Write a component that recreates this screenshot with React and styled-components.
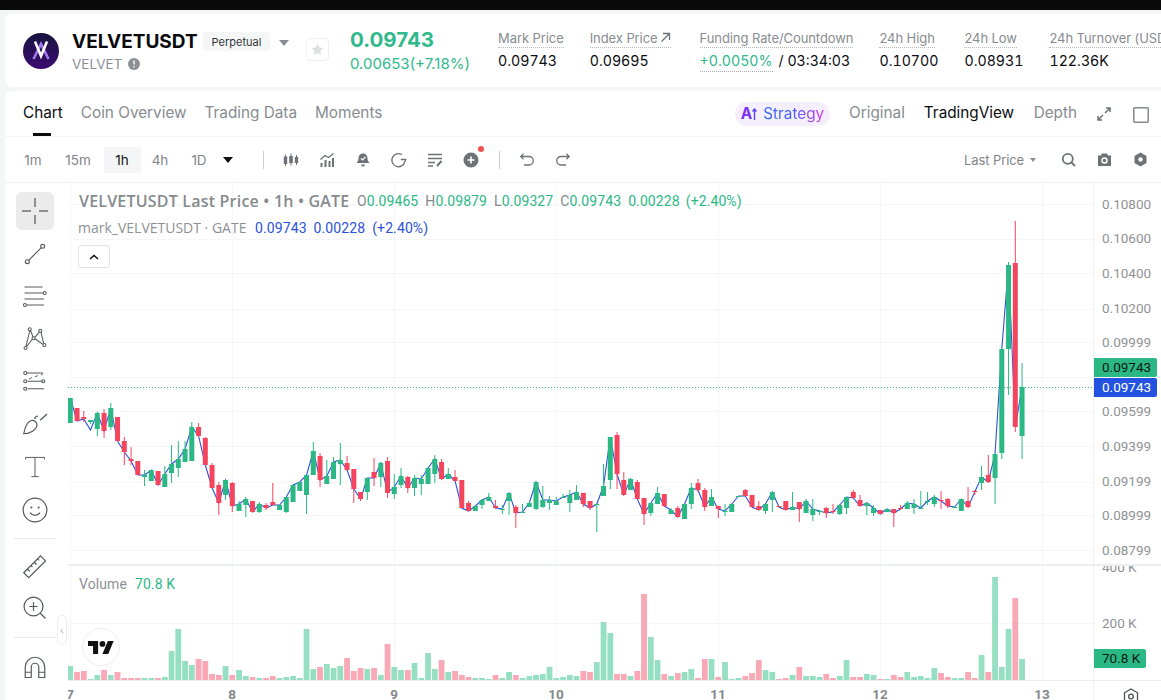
import styled, { createGlobalStyle } from "styled-components";

const GREEN = "#2bb885";
const RED = "#f4455f";
const BLUE = "#2b52d9";
const GRID = "#f5f6f7";

// [green?, body top, body bottom, wick top, wick bottom, volume] in page pixels
const candles = [
  [1,398,423,398,423,14],[0,408,421,408,421,8],[0,417,419,411,422,9],[1,420,422,420,424,1],[1,413,429,412,436,5],
  [0,413,431,409,438,10],[1,408,427,403,430,5],[0,417,441,417,441,8],[0,441,452,437,465,2],[0,459,461,447,465,2],
  [0,461,475,461,475,2],[1,475,477,470,486,2],[1,470,481,470,481,2],[0,471,485,471,485,2],[1,474,487,466,487,3],
  [1,464,473,445,483,29],[1,459,468,441,477,51],[1,449,462,441,462,19],[1,427,461,422,461,15],[0,427,436,423,437,21],
  [0,438,465,437,465,19],[0,465,488,463,488,6],[0,485,503,482,515,5],[1,480,495,480,500,14],[0,483,506,482,512,5],
  [1,504,511,501,511,10],[1,499,505,497,517,4],[0,501,512,501,512,3],[1,504,512,502,513,2],[0,505,508,503,510,2],
  [0,502,505,483,505,4],[1,505,510,505,510,2],[1,497,512,497,513,3],[1,485,502,485,502,4],[1,482,491,482,491,2],
  [1,475,495,475,514,51],[1,451,475,442,475,11],[0,456,480,453,487,13],[1,476,484,460,484,16],[1,462,479,457,479,12],
  [1,460,464,443,485,14],[0,463,470,456,471,22],[0,469,489,469,503,9],[0,492,499,492,501,12],[1,478,492,478,500,11],
  [0,472,478,458,486,12],[1,463,477,462,487,5],[0,461,493,457,498,36],[1,487,494,474,499,13],[1,476,485,468,488,10],
  [0,477,488,476,493,10],[1,478,488,475,496,17],[1,479,484,475,495,2],[1,468,484,468,484,27],[1,459,474,455,483,11],
  [0,462,479,459,480,20],[1,474,479,468,479,8],[0,477,481,470,481,9],[0,480,508,480,508,5],[0,503,511,501,511,3],
  [1,506,511,505,511,2],[1,500,505,499,509,2],[1,497,501,493,501,1],[0,506,508,500,509,5],[1,509,510,505,514,2],
  [1,493,501,493,515,8],[0,507,513,505,528,5],[1,512,513,504,513,2],[1,503,507,502,507,4],[1,482,509,482,510,5],
  [1,500,507,486,508,6],[1,500,503,496,510,13],[1,501,505,497,505,2],[1,497,498,494,498,3],[1,495,503,490,512,5],
  [1,492,500,485,500,4],[0,493,504,493,507,9],[0,501,508,501,510,8],[1,504,505,504,532,18],[1,486,496,464,496,58],
  [1,437,480,437,489,47],[0,435,474,432,489,6],[0,480,495,472,495,6],[1,479,490,478,490,4],[0,482,499,480,499,9],
  [0,498,514,498,525,86],[1,503,513,503,516,43],[1,493,504,487,504,20],[0,494,506,494,507,6],[1,510,514,508,514,4],
  [0,508,517,506,517,7],[1,504,519,504,519,8],[1,488,504,483,509,11],[0,483,490,479,492,2],[0,490,507,488,511,21],
  [1,497,506,489,506,21],[0,506,509,506,518,3],[1,511,512,504,516,18],[1,504,512,504,512,1],[1,496,497,496,497,2],
  [0,490,496,489,496,4],[0,495,507,495,507,7],[0,506,510,501,510,20],[1,504,511,504,514,10],[1,492,500,492,512,8],
  [0,506,507,506,507,1],[0,501,510,501,510,2],[1,507,510,492,510,5],[0,502,509,502,522,13],[1,501,513,499,513,4],
  [1,509,515,499,521,4],[1,511,512,510,515,3],[0,508,513,507,518,6],[0,511,512,504,514,2],[1,505,514,504,515,4],
  [1,497,508,497,514,20],[0,492,498,490,498,3],[0,500,506,495,506,3],[1,503,506,502,515,6],[1,508,513,505,516,5],
  [0,510,514,510,514,1],[1,509,512,509,512,1],[0,509,513,509,527,5],[0,508,509,505,510,3],[1,503,509,501,509,8],
  [1,504,508,499,514,3],[1,508,509,491,509,4],[1,501,502,492,505,2],[1,497,504,495,507,12],[0,500,501,491,509,7],
  [0,499,506,498,508,3],[1,507,508,506,508,2],[1,499,511,499,511,2],[0,501,507,487,508,8],[0,491,492,490,495,2],
  [1,477,483,466,490,25],[0,475,482,455,483,8],[1,454,478,454,504,103],[1,349,453,349,459,13],[1,265,349,262,395,51],
  [0,263,427,221,432,82],[1,387,436,363,459,21],
];

const candleX = (i) => 70.3 + 6.75 * i;
const markLine = candles
  .map(([up, top, bottom], i) => `${candleX(i).toFixed(1)},${i === 3 ? 430 : up ? top : bottom}`)
  .join(" ");

const priceLabels = [
  ["0.10800", 204], ["0.10600", 238], ["0.10400", 273], ["0.10200", 308], ["0.09999", 342],
  ["0.09599", 411], ["0.09399", 446], ["0.09199", 481], ["0.08999", 515], ["0.08799", 550],
];
const gridRows = [204, 239, 273, 309, 342, 377, 411, 446, 482, 515, 550, 623];
const days = [["7", 70], ["8", 232], ["9", 394], ["10", 556], ["11", 718], ["12", 880], ["13", 1042]];

const GlobalStyle = createGlobalStyle`
  html, body {
    margin: 0;
    height: 700px;
    overflow: hidden;
    background: #f5f7f7;
    font-family: Inter, "Liberation Sans", sans-serif;
  }
  * { box-sizing: border-box; }
`;

const Page = styled.div`
  width: 1161px;
  height: 700px;
  display: flex;
  flex-direction: column;
  overflow: hidden;
`;
const BlackBar = styled.div`
  height: 10px;
  flex: none;
  background: #0a0a0a;
`;
const Header = styled.header`
  flex: none;
  height: 73px;
  margin: 4px 0 4px 5px;
  padding-left: 18px;
  display: flex;
  align-items: center;
  background: #fff;
  border-radius: 8px 0 0 8px;
  white-space: nowrap;
  overflow: hidden;
`;
const Logo = styled.svg`
  width: 36px;
  height: 36px;
  flex: none;
  margin-right: 13px;
`;
const NameBlock = styled.div`
  width: 131px;
  flex: none;
  margin-top: 1px;
`;
const SymbolName = styled.div`
  font-size: 19px;
  font-weight: 700;
  color: #0b0b10;
  line-height: 22px;
`;
const SubName = styled.div`
  display: flex;
  align-items: center;
  gap: 6px;
  margin-top: 3px;
  font-size: 13.5px;
  color: #8b9095;
`;
const Badge = styled.span`
  flex: none;
  width: 67px;
  height: 19px;
  margin-top: -18px;
  display: flex;
  align-items: center;
  justify-content: center;
  background: #f5f7f7;
  border-radius: 3px;
  font-size: 11px;
  color: #33363a;
`;
const BadgeCaret = styled.i`
  width: 0;
  height: 0;
  flex: none;
  margin: -16px 0 0 9px;
  border-left: 5px solid transparent;
  border-right: 5px solid transparent;
  border-top: 6px solid #8b8f93;
`;
const StarBox = styled.div`
  width: 23px;
  height: 23px;
  flex: none;
  margin: -2px 21px 0 17px;
  display: flex;
  align-items: center;
  justify-content: center;
  border: 1px solid #eff0f1;
  border-radius: 4px;
`;
const PriceBlock = styled.div`
  width: 148px;
  flex: none;
  color: #2fb98c;
`;
const LastPrice = styled.div`
  font-size: 20.5px;
  font-weight: 700;
  line-height: 26px;
`;
const PriceChange = styled.div`
  margin-top: 1px;
  font-size: 15px;
  line-height: 20px;
`;
const Stats = styled.div`
  display: flex;
  flex: none;
  gap: 26px;
  margin-top: -2px;
`;
const Stat = styled.div`
  display: flex;
  flex-direction: column;
  align-items: flex-start;
  margin-right: ${(p) => p.$extra || 0}px;
`;
const StatLabel = styled.div`
  display: flex;
  align-items: center;
  gap: 2px;
  height: 20px;
  font-size: 13px;
  letter-spacing: -0.08px;
  color: #878c91;
  border-bottom: 1px dotted #b8bbbe;
`;
const StatValue = styled.div`
  margin-top: 3px;
  height: 20px;
  font-size: 14.2px;
  line-height: 20px;
  font-variant-numeric: tabular-nums;
  color: #0b0b10;
`;
const FundingRate = styled.span`
  display: inline-block;
  margin-right: 6px;
  color: #2fb98c;
  border-bottom: 1px dotted #a8abae;
`;

const Panel = styled.section`
  flex: 1;
  min-height: 0;
  margin-left: 5px;
  display: flex;
  flex-direction: column;
  background: #fff;
  border-radius: 8px 0 0 0;
`;
const TabBar = styled.nav`
  flex: none;
  height: 46px;
  padding-left: 18px;
  display: flex;
  align-items: center;
  border-bottom: 1px solid #f3f4f5;
`;
const Tab = styled.button`
  position: relative;
  height: 45px;
  margin-right: ${(p) => p.$gap || 18}px;
  padding: 0 0 2px;
  border: 0;
  background: none;
  font: 400 15.3px Inter, sans-serif;
  white-space: nowrap;
  color: ${(p) => (p.$active ? "#0b0b10" : "#878c91")};
  &::after {
    content: "";
    display: ${(p) => (p.$underline ? "block" : "none")};
    position: absolute;
    left: 10px;
    bottom: 0;
    width: 18px;
    height: 3px;
    background: #0b0b10;
  }
`;
const Spacer = styled.div`
  flex: 1;
`;
const StrategyPill = styled.div`
  height: 24px;
  width: 95px;
  flex: none;
  margin-right: 19px;
  display: flex;
  align-items: center;
  justify-content: center;
  gap: 6px;
  border-radius: 12px;
  background: #f5effd;
  font-size: 15.3px;
`;
const StrategyText = styled.span`
  background: linear-gradient(90deg, #3367f2, #3f62f0 45%, #d23be6);
  -webkit-background-clip: text;
  background-clip: text;
  color: transparent;
`;
const AiMark = styled.span`
  font-weight: 700;
  color: #7b2ff0;
  display: flex;
  align-items: center;
`;
const WindowIcon = styled.svg`
  flex: none;
  display: block;
`;
const SquareIcon = styled(WindowIcon)`
  margin: 2px 12px 0 22px;
`;

const Toolbar = styled.div`
  flex: none;
  height: 46px;
  padding-right: 3px;
  display: flex;
  align-items: center;
  border-bottom: 1px solid #f0f1f2;
`;
const Intervals = styled.div`
  display: flex;
  align-items: center;
  flex: none;
  padding-left: 9.5px;
  width: 258px;
`;
const Interval = styled.span`
  width: 37px;
  height: 26px;
  margin-right: ${(p) => p.$gap}px;
  display: flex;
  align-items: center;
  justify-content: center;
  border-radius: 3px;
  font-size: 13.5px;
  color: ${(p) => (p.$active ? "#111" : "#7f8488")};
  background: ${(p) => (p.$active ? "#f4f5f6" : "transparent")};
`;
const IntervalCaret = styled.i`
  width: 0;
  height: 0;
  border-left: 5px solid transparent;
  border-right: 5px solid transparent;
  border-top: 6px solid #111;
`;
const ToolDivider = styled.i`
  width: 1px;
  height: 18px;
  background: #c9cbcd;
  flex: none;
`;
const ToolSlot = styled.span`
  position: relative;
  width: 36px;
  flex: none;
  display: flex;
  justify-content: center;
  color: #6e7276;
`;
const ToolGroup = styled.div`
  display: flex;
  flex: none;
  margin: ${(p) => p.$margin};
`;
const RedDot = styled.i`
  position: absolute;
  top: -6px;
  right: 5px;
  width: 6px;
  height: 6px;
  border-radius: 50%;
  background: #f0504f;
`;
const PriceMode = styled.div`
  display: flex;
  align-items: center;
  gap: 6px;
  margin-right: 14px;
  font-size: 13px;
  letter-spacing: -0.1px;
  color: #7f8488;
`;
const SmallCaret = styled.i`
  width: 0;
  height: 0;
  border-left: 3.5px solid transparent;
  border-right: 3.5px solid transparent;
  border-top: 4px solid #8b8f93;
`;

const Workspace = styled.div`
  flex: 1;
  min-height: 0;
  display: flex;
`;
const Rail = styled.aside`
  position: relative;
  width: 63px;
  flex: none;
  padding: 9px 4px 0 0;
  display: flex;
  flex-direction: column;
  align-items: center;
  overflow: hidden;
`;
const RailButton = styled.div`
  width: 38px;
  height: 38px;
  margin-bottom: 4.7px;
  flex: none;
  display: flex;
  align-items: center;
  justify-content: center;
  border-radius: 6px;
  color: #55585c;
  background: ${(p) => (p.$active ? "#ebebeb" : "transparent")};
`;
const RailDivider = styled.i`
  width: 42px;
  height: 1px;
  flex: none;
  margin: ${(p) => p.$margin};
  background: #e8e9ea;
`;
const CollapseHandle = styled.div`
  position: absolute;
  left: 52px;
  top: 432px;
  width: 10px;
  height: 30px;
  display: flex;
  align-items: center;
  justify-content: center;
  border: 1px solid #eceded;
  border-radius: 5px;
  background: #fff;
  font: 10px "Liberation Sans", sans-serif;
  color: #a4a7aa;
`;

const ChartArea = styled.div`
  position: relative;
  flex: 1;
  min-width: 0;
  overflow: hidden;
`;
const ChartSvg = styled.svg`
  display: block;
  width: 1093px;
  height: 517px;
`;
const AxisText = styled.text`
  font: 13.5px Roboto, "Liberation Sans", sans-serif;
  fill: #8f9295;
  dominant-baseline: central;
`;
const DayText = styled.text`
  font: 700 13.5px Roboto, "Liberation Sans", sans-serif;
  fill: #85888b;
  text-anchor: middle;
  dominant-baseline: central;
`;
const Legend = styled.div`
  position: absolute;
  left: 11px;
  top: 7px;
  display: flex;
  flex-direction: column;
  align-items: flex-start;
  white-space: nowrap;
  font: 14px "Open Sans", sans-serif;
`;
const LegendRow = styled.div`
  display: flex;
  align-items: center;
  height: 21px;
  margin-bottom: ${(p) => p.$mb}px;
`;
const LegendTitle = styled.span`
  width: 278px;
  font-size: 16px;
  letter-spacing: 0.2px;
  font-weight: 600;
  color: #858a8e;
`;
const MarkTitle = styled.span`
  width: 177px;
  margin-left: -1px;
  font-size: 14px;
  color: #8d9195;
`;
const Ohlc = styled.span`
  margin-right: ${(p) => p.$gap || 7}px;
  color: ${(p) => p.$color};
  font: 14px Roboto, sans-serif;
  letter-spacing: 0.1px;
  b {
    font-weight: 400;
    color: #858a8e;
  }
`;
const CollapseLegend = styled.button`
  width: 32px;
  height: 23px;
  margin-left: -1px;
  padding: 0;
  display: flex;
  align-items: center;
  justify-content: center;
  border: 1px solid #e2e3e4;
  border-radius: 3px;
  background: #fff;
`;
const VolumeLegend = styled.div`
  position: absolute;
  left: 11px;
  top: 393px;
  display: flex;
  gap: 8px;
  font: 14px Roboto, sans-serif;
  letter-spacing: 0.1px;
  color: #8d9195;
`;
const VolumeValue = styled.span`
  color: ${GREEN};
`;
const TvBadge = styled.div`
  position: absolute;
  left: 14px;
  top: 445px;
  width: 38px;
  height: 38px;
  display: flex;
  align-items: center;
  justify-content: center;
  border: 1px solid #eeeeef;
  border-radius: 50%;
  background: #fff;
`;
const PriceTag = styled.div`
  position: absolute;
  left: 1026px;
  top: ${(p) => p.$top}px;
  width: ${(p) => p.$width || 63}px;
  height: 19px;
  padding-left: 8px;
  border-radius: 0 2px 2px 0;
  font: 13.5px/19px Roboto, sans-serif;
  color: ${(p) => (p.$blue ? "#fff" : "#0c1a14")};
  background: ${(p) => (p.$blue ? "#2353e0" : GREEN)};
`;

function VelvetLogo() {
  return (
    <Logo viewBox="0 0 36 36">
      <defs>
        <linearGradient id="velvetBg" x1="0" y1="0" x2="0" y2="1">
          <stop offset="0" stopColor="#18133f" />
          <stop offset="1" stopColor="#3a0d70" />
        </linearGradient>
      </defs>
      <circle cx="18" cy="18" r="18" fill="url(#velvetBg)" />
      <path d="M10.5 26 18 11l7.5 15" fill="none" stroke="#a678ee" strokeWidth="2.6" />
      <path d="M12 8.5 18 23l6-14.5" fill="none" stroke="#fff" strokeWidth="2.6" />
    </Logo>
  );
}

function Candle({ data, index }) {
  const [up, top, bottom, wickTop, wickBottom] = data;
  const x = candleX(index);
  return (
    <g fill={up ? GREEN : RED}>
      <rect x={x - 0.5} y={wickTop} width="1" height={wickBottom - wickTop} />
      <rect x={x - 2.5} y={top} width="5" height={bottom - top} />
    </g>
  );
}

function Chart() {
  return (
    <ChartSvg viewBox="68 183 1093 517">
      {gridRows.map((y) => (
        <line key={y} x1="68" x2="1093" y1={y + 0.5} y2={y + 0.5} stroke={GRID} />
      ))}
      {days.map(([label, x]) => (
        <line key={label} x1={x + 0.5} x2={x + 0.5} y1="183" y2="680" stroke={GRID} />
      ))}
      {candles.map((c, i) => (
        <rect
          key={i}
          x={candleX(i) - 2.9}
          y={680 - c[5]}
          width="5.8"
          height={c[5]}
          fill={c[0] ? "#97dfc3" : "#f9a8b6"}
        />
      ))}
      <line x1="68" x2="1093" y1="387.5" y2="387.5" stroke="#2bb8a0" strokeDasharray="1 2" shapeRendering="crispEdges" />
      <polyline points={markLine} fill="none" stroke={BLUE} strokeWidth="1.1" />
      {candles.map((c, i) => (
        <Candle key={i} data={c} index={i} />
      ))}
      <line x1="1093.5" x2="1093.5" y1="183" y2="700" stroke="#eeeff0" />
      <AxisText x="1102" y="567">400 K</AxisText>
      <AxisText x="1102" y="623">200 K</AxisText>
      <rect x="68" y="564" width="1093" height="2" fill="#edeeef" />
      <rect x="1094" y="480" width="67" height="84" fill="#fff" />
      <rect x="68" y="680" width="1093" height="1" fill="#eeeff0" />
      {priceLabels.map(([label, y]) => (
        <AxisText key={label} x="1102" y={y}>{label}</AxisText>
      ))}
      {days.map(([label, x]) => (
        <DayText key={label} x={x} y="694">{label}</DayText>
      ))}
      <path
        d="M1131 689 l6.5 3.8 v7.5 l-6.5 3.8 l-6.5 -3.8 v-7.5 Z"
        fill="none"
        stroke="#4d5054"
        strokeWidth="1.3"
      />
      <circle cx="1131" cy="696.5" r="2.3" fill="none" stroke="#4d5054" strokeWidth="1.3" />
    </ChartSvg>
  );
}

function Glyph({ children, size = 30 }) {
  return (
    <WindowIcon width={size} height={size} viewBox="0 0 20 20" fill="none" stroke="currentColor" strokeWidth="0.8">
      {children}
    </WindowIcon>
  );
}

const railIcons = [
  <Glyph key="trend" size={28}>
    <circle cx="4.5" cy="15.5" r="1.4" /><circle cx="15.5" cy="4.5" r="1.4" /><path d="M5.5 14.5 14.5 5.5" />
  </Glyph>,
  <Glyph key="fib">
    <path d="M3 4h12M3 8h12.5M3 12h13M4.5 16H16" /><circle cx="16.5" cy="8" r="1" strokeWidth="0.7" /><circle cx="3.3" cy="16" r="1" strokeWidth="0.7" />
  </Glyph>,
  <Glyph key="xabcd">
    <circle cx="6.5" cy="3.5" r="1" strokeWidth="0.7" /><circle cx="13.5" cy="4.5" r="1" strokeWidth="0.7" /><circle cx="9" cy="9.5" r="1" strokeWidth="0.7" /><circle cx="3.7" cy="16" r="1" strokeWidth="0.7" /><circle cx="16.2" cy="14" r="1" strokeWidth="0.7" />
    <path d="M6.5 4.5 4 15M7 4.3 8.7 8.7M13 5.3 10 8.8M14 5.4 15.8 13M4.3 15.2 8.2 10.2M10 9.8 15.3 13.6" strokeWidth="0.7" />
  </Glyph>,
  <Glyph key="position">
    <path d="M4.5 4h11M5 9.5h10M5 14.5h11" /><path d="M6 8l2-1M10 6.5l2-.8M14 5.2l1.2-.4" strokeWidth="0.6" />
    <circle cx="3.5" cy="4" r="1" strokeWidth="0.7" /><circle cx="3.5" cy="9.5" r="1" strokeWidth="0.7" /><circle cx="15.5" cy="9.5" r="1" strokeWidth="0.7" /><circle cx="3.5" cy="14.5" r="1" strokeWidth="0.7" />
  </Glyph>,
  <Glyph key="brush">
    <path d="M2.5 16.5c.6-3.5 2-7.8 5-8.8 1.6-.5 3.8.8 3.8 2.7 0 3.3-4.2 6-8.8 6.1Z" /><path d="M9.8 6.8c.2-1.3 1-2 2-2M13.5 7.5 18 3.3" />
  </Glyph>,
  <Glyph key="text">
    <path d="M3.7 5V3.6h12.6V5M10 3.6v12.6M7.6 16.4h4.8" strokeWidth="0.65" />
  </Glyph>,
  <Glyph key="emoji">
    <circle cx="10" cy="10" r="7.9" /><circle cx="7.6" cy="8.3" r=".7" fill="currentColor" stroke="none" /><circle cx="12.4" cy="8.3" r=".7" fill="currentColor" stroke="none" /><path d="M6.7 11.8c1.6 2.4 5 2.4 6.6 0" />
  </Glyph>,
];

function App() {
  return (
    <Page>
      <GlobalStyle />
      <BlackBar />
      <Header>
        <VelvetLogo />
        <NameBlock>
          <SymbolName>VELVETUSDT</SymbolName>
          <SubName>
            VELVET
            <svg width="12" height="12" viewBox="0 0 12 12">
              <circle cx="6" cy="6" r="6" fill="#8b8f93" />
              <path d="M6 2.6v4M6 8v1.4" stroke="#fff" strokeWidth="1.4" />
            </svg>
          </SubName>
        </NameBlock>
        <Badge>Perpetual</Badge>
        <BadgeCaret />
        <StarBox>
          <svg width="13" height="13" viewBox="0 0 24 24" fill="#dcdedf">
            <path d="M12 1.5l3.3 6.9 7.5 1-5.5 5.2 1.4 7.5L12 18.4l-6.7 3.7 1.4-7.5L1.2 9.4l7.5-1z" />
          </svg>
        </StarBox>
        <PriceBlock>
          <LastPrice>0.09743</LastPrice>
          <PriceChange>0.00653(+7.18%)</PriceChange>
        </PriceBlock>
        <Stats>
          <Stat>
            <StatLabel>Mark Price</StatLabel>
            <StatValue>0.09743</StatValue>
          </Stat>
          <Stat $extra={3}>
            <StatLabel>
              Index Price
              <svg width="11" height="11" viewBox="0 0 11 11" fill="none" stroke="#6e7276" strokeWidth="1.3">
                <path d="M1.5 9.5 9.5 1.5M3 1.5h6.5V8" />
              </svg>
            </StatLabel>
            <StatValue>0.09695</StatValue>
          </Stat>
          <Stat>
            <StatLabel>Funding Rate/Countdown</StatLabel>
            <StatValue>
              <FundingRate>+0.0050%</FundingRate>/ 03:34:03
            </StatValue>
          </Stat>
          <Stat>
            <StatLabel>24h High</StatLabel>
            <StatValue>0.10700</StatValue>
          </Stat>
          <Stat>
            <StatLabel>24h Low</StatLabel>
            <StatValue>0.08931</StatValue>
          </Stat>
          <Stat>
            <StatLabel>24h Turnover (USDT)</StatLabel>
            <StatValue>122.36K</StatValue>
          </Stat>
        </Stats>
      </Header>
      <Panel>
        <TabBar>
          <Tab $active $underline>Chart</Tab>
          <Tab>Coin Overview</Tab>
          <Tab>Trading Data</Tab>
          <Tab>Moments</Tab>
          <Spacer />
          <StrategyPill>
            <AiMark>
              A
              <svg width="5" height="12" viewBox="0 0 5 12" fill="none" stroke="#5b45f0" strokeWidth="1.4">
                <path d="M2.5 12V1M.5 3.5l2-2.5 2 2.5" />
              </svg>
            </AiMark>
            <StrategyText>Strategy</StrategyText>
          </StrategyPill>
          <Tab $gap={19}>Original</Tab>
          <Tab $active $gap={19.5}>TradingView</Tab>
          <Tab $gap={20}>Depth</Tab>
          <WindowIcon width="14" height="14" viewBox="0 0 14 14" fill="none" stroke="#6e7276" strokeWidth="1.5">
            <path d="M8 6l5-5M9 1h4v4M6 8l-5 5M1 9v4h4" />
          </WindowIcon>
          <SquareIcon width="16" height="16" viewBox="0 0 16 16" fill="none" stroke="#85888b" strokeWidth="1.5">
            <rect x=".8" y=".8" width="14.4" height="14.4" rx="1" />
          </SquareIcon>
        </TabBar>
        <Toolbar>
          <Intervals>
            <Interval $gap={8}>1m</Interval>
            <Interval $gap={7}>15m</Interval>
            <Interval $active $gap={1}>1h</Interval>
            <Interval $gap={2}>4h</Interval>
            <Interval $gap={5}>1D</Interval>
            <IntervalCaret />
          </Intervals>
          <ToolDivider />
          <ToolGroup $margin="0 10px 0 9px">
            <ToolSlot>
              <svg width="16" height="16" viewBox="0 0 16 16" fill="currentColor">
                <path d="M2 2.5h1v2h1.2V12H3v2H2v-2H.8V4.5H2zM7.5 1.5h1V4h1.3v7H8.5v2.5h-1V11H6.200V4h1.300zM13 3h1v2h1.2v6H14v2h-1v-2h-1.200V5H13z" />
              </svg>
            </ToolSlot>
            <ToolSlot>
              <svg width="16" height="16" viewBox="0 0 16 16" fill="none" stroke="currentColor">
                <path d="M1.5 7.5 6 3.5l3.5 2 5-4" strokeWidth="1.3" />
                <path d="M2.5 15v-4M6.5 15V8M10.5 15V9M14 15V6" strokeWidth="2" />
              </svg>
            </ToolSlot>
            <ToolSlot>
              <svg width="16" height="16" viewBox="0 0 16 16" fill="currentColor">
                <path d="M8 1.5c3 0 4.5 2.3 4.5 5 0 2.2.8 3.3 2 4.5H1.5c1.200-1.200 2-2.300 2-4.500 0-2.700 1.500-5 4.500-5Z" />
                <path d="M6 12.5h4a2 2 0 0 1-4 0Z" />
                <path d="M5.8 6.4 7.5 8l2.8-3" fill="none" stroke="#fff" strokeWidth="1.2" />
              </svg>
            </ToolSlot>
            <ToolSlot>
              <svg width="16" height="16" viewBox="0 0 16 16" fill="none" stroke="currentColor" strokeWidth="1.3">
                <path d="M13.8 9.5A6.5 6.5 0 1 1 11 2.8" />
                <path d="M9.8 7.5h4.9L14 9.8" />
              </svg>
            </ToolSlot>
            <ToolSlot>
              <svg width="16" height="16" viewBox="0 0 16 16" fill="none" stroke="currentColor" strokeWidth="1.4">
                <path d="M1 2.5h14M1 6.5h14M1 10.5h7M1 14h5" />
                <path d="M10 14l4.5-5" strokeWidth="2" />
              </svg>
            </ToolSlot>
            <ToolSlot>
              <svg width="16" height="16" viewBox="0 0 16 16">
                <circle cx="8" cy="8" r="7.5" fill="currentColor" />
                <path d="M8 4.5v7M4.5 8h7" stroke="#fff" strokeWidth="1.6" />
              </svg>
              <RedDot />
            </ToolSlot>
          </ToolGroup>
          <ToolDivider />
          <ToolGroup $margin="0 0 0 9px">
            <ToolSlot>
              <svg width="16" height="16" viewBox="0 0 16 16" fill="none" stroke="currentColor" strokeWidth="1.3">
                <path d="M2 4.5h8a4 4 0 0 1 0 8.5H5M4.5 1.8 1.8 4.5l2.700 2.700" />
              </svg>
            </ToolSlot>
            <ToolSlot>
              <svg width="16" height="16" viewBox="0 0 16 16" fill="none" stroke="currentColor" strokeWidth="1.3">
                <path d="M14 4.5H6a4 4 0 0 0 0 8.5h5M11.5 1.8l2.7 2.7-2.7 2.7" />
              </svg>
            </ToolSlot>
          </ToolGroup>
          <Spacer />
          <PriceMode>
            Last Price
            <SmallCaret />
          </PriceMode>
          <ToolSlot>
            <svg width="15" height="15" viewBox="0 0 15 15" fill="none" stroke="currentColor" strokeWidth="1.8">
              <circle cx="6.8" cy="6.8" r="5" /><path d="M10.5 10.5 14 14" />
            </svg>
          </ToolSlot>
          <ToolSlot>
            <svg width="15" height="15" viewBox="0 0 15 15">
              <path d="M1 3.5h3L5 1.5h5l1 2h3V14H1z" fill="currentColor" />
              <circle cx="7.5" cy="8.5" r="2.5" fill="none" stroke="#fff" strokeWidth="1.4" />
            </svg>
          </ToolSlot>
          <ToolSlot>
            <svg width="15" height="15" viewBox="0 0 15 15">
              <path d="M7.5 .5 13.5 4v7l-6 3.5L1.5 11V4z" fill="currentColor" />
              <circle cx="7.5" cy="7.5" r="2.2" fill="#fff" />
            </svg>
          </ToolSlot>
        </Toolbar>
        <Workspace>
          <Rail>
            <RailButton $active>
              <svg width="26" height="26" viewBox="0 0 26 26" fill="none" stroke="#333">
                <path d="M13 0v9M13 17v9M0 13h9M17 13h9" />
              </svg>
            </RailButton>
            {railIcons.map((icon) => (
              <RailButton key={icon.key}>{icon}</RailButton>
            ))}
            <RailDivider $margin="4px 0 8px" />
            <RailButton>
              <Glyph>
                <path d="M2.5 14.5 13.7 3.3l3.3 3.3L5.8 17.8zM5 12l1.5 1.5M7.3 9.7l1 1M9.5 7.5 11 9M11.8 5.2l1 1" />
              </Glyph>
            </RailButton>
            <RailButton>
              <Glyph>
                <circle cx="9" cy="9" r="6.3" /><path d="M9 6.2v5.6M6.2 9h5.6" /><path d="m13.5 13.5 3.5 3.5" />
              </Glyph>
            </RailButton>
            <RailDivider $margin="5px 0 10px" />
            <RailButton>
              <Glyph>
                <path d="M3.5 17V10a6.5 6.5 0 0 1 13 0v7h-4v-7a2.5 2.5 0 0 0-5 0v7zM3.5 13.5h4M12.5 13.5h4" />
              </Glyph>
            </RailButton>
            <CollapseHandle>‹</CollapseHandle>
          </Rail>
          <ChartArea>
            <Chart />
            <Legend>
              <LegendRow $mb={6}>
                <LegendTitle>VELVETUSDT Last Price • 1h • GATE</LegendTitle>
                <Ohlc $color={GREEN}><b>O</b>0.09465</Ohlc>
                <Ohlc $color={GREEN}><b>H</b>0.09879</Ohlc>
                <Ohlc $color={GREEN}><b>L</b>0.09327</Ohlc>
                <Ohlc $color={GREEN}><b>C</b>0.09743</Ohlc>
                <Ohlc $color={GREEN} $gap={6}>0.00228</Ohlc>
                <Ohlc $color={GREEN}>(+2.40%)</Ohlc>
              </LegendRow>
              <LegendRow $mb={7}>
                <MarkTitle>mark_VELVETUSDT · GATE</MarkTitle>
                <Ohlc $color={BLUE}>0.09743</Ohlc>
                <Ohlc $color={BLUE}>0.00228</Ohlc>
                <Ohlc $color={BLUE}>(+2.40%)</Ohlc>
              </LegendRow>
              <CollapseLegend>
                <svg width="10" height="6" viewBox="0 0 10 6" fill="none" stroke="#111" strokeWidth="1.6">
                  <path d="M1 5l4-3.5L9 5" />
                </svg>
              </CollapseLegend>
            </Legend>
            <VolumeLegend>
              Volume
              <VolumeValue>70.8 K</VolumeValue>
            </VolumeLegend>
            <TvBadge>
              <svg width="26" height="13" viewBox="0 4 36 18" fill="#111">
                <path d="M14 22H7V11H0V4h14v18zM28 22h-8l7.5-18h8L28 22z" />
                <circle cx="20" cy="8" r="4" />
              </svg>
            </TvBadge>
            <PriceTag $top={175}>0.09743</PriceTag>
            <PriceTag $top={195} $blue>0.09743</PriceTag>
            <PriceTag $top={466} $width={52}>70.8 K</PriceTag>
          </ChartArea>
        </Workspace>
      </Panel>
    </Page>
  );
}

export default App;
